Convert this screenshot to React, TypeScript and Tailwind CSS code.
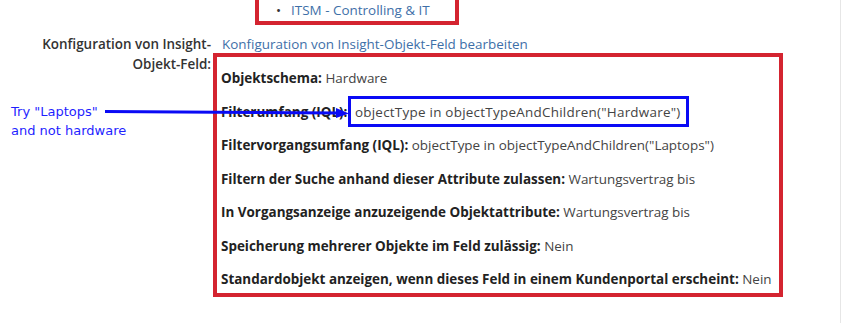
const font = { fontFamily: '"Open Sans", "Noto Sans", sans-serif' };

const rows: { label: string; value: string; mark?: boolean }[] = [
  { label: 'Objektschema:', value: 'Hardware' },
  { label: 'Filterumfang (IQL):', value: 'objectType in objectTypeAndChildren("Hardware")', mark: true },
  { label: 'Filtervorgangsumfang (IQL):', value: 'objectType in objectTypeAndChildren("Laptops")' },
  { label: 'Filtern der Suche anhand dieser Attribute zulassen:', value: 'Wartungsvertrag bis' },
  { label: 'In Vorgangsanzeige anzuzeigende Objektattribute:', value: 'Wartungsvertrag bis' },
  { label: 'Speicherung mehrerer Objekte im Feld zulässig:', value: 'Nein' },
  { label: 'Standardobjekt anzeigen, wenn dieses Feld in einem Kundenportal erscheint:', value: 'Nein' },
];

export default function App() {
  return (
    <div
      className="relative w-[842px] h-[323px] overflow-hidden bg-white text-[13.45px] text-[#333333]"
      style={font}
    >
      <div className="absolute top-0 right-[1px] h-full w-px bg-[#e6e6e6]" />

      {/* linked issues box */}
      <div className="ml-[255px] w-[204px] h-[25px] border-4 border-t-0 border-[#d42430] flex items-center pl-[17px] text-[#3e6fa8]">
        <span className="mr-[10px] text-[#333333]">•</span>
        <span>ITSM - Controlling &amp; IT</span>
      </div>

      <div className="flex mt-[9px]">
        <div className="w-[211px] shrink-0 text-right font-semibold leading-[20px] text-[#333333]">
          Konfiguration von Insight-
          <br />
          Objekt-Feld:
        </div>
        <div className="pl-[11px]">
          <div className="leading-[20px] text-[#3e6fa8]">Konfiguration von Insight-Objekt-Feld bearbeiten</div>
          <div className="-ml-[9px] mt-[-1px] w-[570px] h-[244px] border-4 border-[#d42430] pt-[11px] pl-[4px] flex flex-col gap-[13.5px]">
            {rows.map((r) => (
              <div key={r.label} className="leading-[20px] whitespace-nowrap">
                <span className="font-bold text-[#222222]">{r.label}</span>{' '}
                {r.mark ? (
                  <span className="relative ml-[4px] tracking-[0.25px] text-[#444444]">
                    {r.value}
                    <span className="absolute -left-[7px] -right-[8px] -top-[7px] -bottom-[6px] border-[3px] border-[#0a0af5]" />
                  </span>
                ) : (
                  <span className="text-[#444444]">{r.value}</span>
                )}
              </div>
            ))}
          </div>
        </div>
      </div>

      {/* annotation */}
      <div
        className="absolute left-[11px] top-[102px] text-[13px] leading-[19px] text-[#1f1fff]"
        style={{ fontFamily: '"DejaVu Sans", Verdana, sans-serif' }}
      >
        Try "Laptops"
        <br />
        and not hardware
      </div>
      <svg className="absolute left-0 top-0" width="842" height="323">
        <line x1="105" y1="111.5" x2="338" y2="113" stroke="#0a0af5" strokeWidth="3" />
        <polygon points="336,108 349,113.5 336,118" fill="#0a0af5" />
      </svg>
    </div>
  );
}
